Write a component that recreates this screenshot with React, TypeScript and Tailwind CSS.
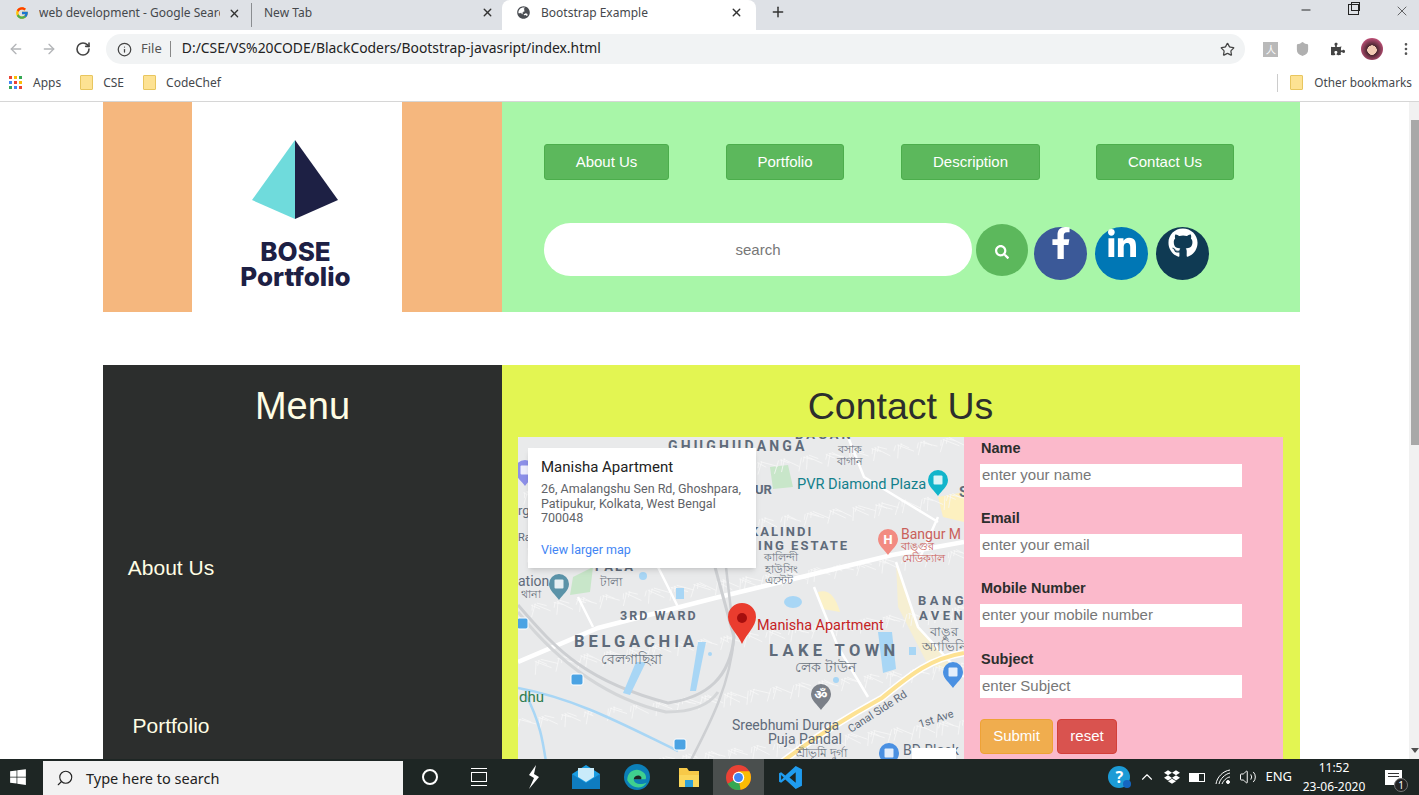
import { ArrowLeft, ArrowRight, ChevronUp, Info, Minus, MoreVertical, Plus, RotateCw, Search, Shield, Star, Volume2, X } from "lucide-react";
import { FaDropbox, FaFacebookF, FaGithub, FaGlobeAsia, FaLinkedinIn, FaPuzzlePiece, FaSearch, FaWindows } from "react-icons/fa";
import { FcGoogle } from "react-icons/fc";

const fields = [
  { label: "Name", placeholder: "enter your name", cls: "mt-0" },
  { label: "Email", placeholder: "enter your email", cls: "mt-[21px]" },
  { label: "Mobile Number", placeholder: "enter your mobile number", cls: "mt-[21px]" },
  { label: "Subject", placeholder: "enter Subject", cls: "mt-[22px]" },
];

function Folder() {
  return <span className="w-[13px] h-[15px] rounded-[1px] bg-[#fde293] border border-[#e8c65f] shrink-0" />;
}

function Tabs() {
  return (
    <div className="h-[30px] bg-[#dee1e6] flex text-[12px] text-[#45484c] shrink-0">
      <div className="w-[252px] flex items-center pl-[15px] pr-[10px] pb-[4px] border-r border-[#8a8d91] my-[3px]">
        <FcGoogle className="w-[14px] h-[14px] shrink-0" />
        <span className="ml-[10px] w-[184px] overflow-hidden whitespace-nowrap">web development - Google Search</span>
        <X className="ml-[8px] w-[13px] h-[13px] text-[#333]" strokeWidth={2.5} />
      </div>
      <div className="w-[250px] flex items-center pl-[12px] pr-[8px] pb-[5px] justify-between">
        <span>New Tab</span>
        <X className="w-[13px] h-[13px] text-[#333]" strokeWidth={2.5} />
      </div>
      <div className="w-[254px] bg-white rounded-t-lg flex items-center pl-[15px] pr-[13px] pb-[5px]">
        <FaGlobeAsia className="w-[13px] h-[13px] text-[#4a4d52]" />
        <span className="ml-[11px] flex-1">Bootstrap Example</span>
        <X className="w-[13px] h-[13px] text-[#333]" strokeWidth={2.5} />
      </div>
      <Plus className="ml-[14px] mt-[4px] w-[16px] h-[16px] text-[#333]" strokeWidth={2.2} />
      <div className="ml-auto flex items-start pt-[3px] pr-[9px] gap-[35px] text-[#222]">
        <Minus className="w-[14px] h-[14px] text-black" strokeWidth={1.4} />
        <span className="relative w-[11px] h-[11px] mt-[1px] border border-[#222] bg-[#dee1e6] before:absolute before:content-[''] before:left-[2px] before:-top-[3px] before:w-[9px] before:h-[9px] before:border before:border-[#222]" />
        <X className="w-[16px] h-[16px]" strokeWidth={1} />
      </div>
    </div>
  );
}

function Toolbar() {
  return (
    <div className="h-[38px] bg-white flex items-center text-[#5f6368] shrink-0">
      <ArrowLeft className="ml-[8px] w-[16px] h-[16px] text-[#b3b5b8]" />
      <ArrowRight className="ml-[17px] w-[16px] h-[16px] text-[#b3b5b8]" />
      <RotateCw className="ml-[18px] w-[16px] h-[16px] text-[#444]" strokeWidth={2.4} />
      <div className="ml-[15px] w-[1139px] h-[30px] rounded-full bg-[#f1f3f4] flex items-center text-[13px]">
        <Info className="ml-[11px] w-[15px] h-[15px] text-[#444]" />
        <span className="ml-[9px] text-[#555]">File</span>
        <span className="ml-[8px] w-px h-[16px] bg-[#888]" />
        <span className="ml-[11px] mb-[2px] text-[13.9px] text-[#222]">D:/CSE/VS%20CODE/BlackCoders/Bootstrap-javasript/index.html</span>
        <Star className="ml-auto mr-[10px] w-[15px] h-[15px] text-[#444]" />
      </div>
      <div className="ml-[18px] w-[15px] h-[15px] bg-[#b9b9b9] flex items-center justify-center text-[10px] leading-none text-white">人</div>
      <Shield className="ml-[17px] w-[15px] h-[18px] text-[#b0b0b0] fill-[#b0b0b0]" />
      <FaPuzzlePiece className="ml-[21px] w-[14px] h-[14px] text-[#444]" />
      <div className="ml-[16px] w-[22px] h-[22px] rounded-full bg-[radial-gradient(circle_at_50%_55%,#f2cbb4_28%,#4a2730_30%,#c2527a_75%)]" />
      <MoreVertical className="ml-[15px] w-[16px] h-[16px] text-[#555]" />
    </div>
  );
}

function Bookmarks() {
  const dots = ["#ea4335", "#fbbc05", "#34a853", "#4285f4", "#ea4335", "#fbbc05", "#34a853", "#4285f4", "#ea4335"];
  return (
    <div className="h-[34px] pb-[4px] bg-white border-b border-[#d6d6d6] flex items-center text-[12px] text-[#45484c] shrink-0">
      <div className="ml-[9px] grid grid-cols-3 gap-[2px]">
        {dots.map((c, i) => (
          <span key={i} className="w-[3px] h-[3px]" style={{ background: c }} />
        ))}
      </div>
      <span className="ml-[11px]">Apps</span>
      <span className="ml-[19px] flex"><Folder /></span>
      <span className="ml-[10px]">CSE</span>
      <span className="ml-[19px] flex"><Folder /></span>
      <span className="ml-[10px]">CodeChef</span>
      <span className="ml-auto w-px h-[18px] bg-[#ccc]" />
      <span className="ml-[12px] flex"><Folder /></span>
      <span className="ml-[11px] mr-[7px] text-[11.8px]">Other bookmarks</span>
    </div>
  );
}

function Pin({ x, y, color, glyph }: { x: number; y: number; color: string; glyph?: string }) {
  return (
    <g transform={`translate(${x} ${y})`}>
      <path d="M0 13 C-3 8 -10 4 -10 -3 A10 10 0 1 1 10 -3 C10 4 3 8 0 13Z" fill={color} />
      {glyph ? (
        <text x="0" y="2" textAnchor="middle" fill="#fff" style={{ font: "700 13px 'Noto Sans', sans-serif" }}>{glyph}</text>
      ) : (
        <rect x="-4.5" y="-7.5" width="9" height="9" rx="1" fill="#fff" opacity="0.85" />
      )}
    </g>
  );
}

function MapArt() {
  // thin side streets, scattered the same way on every render
  const streets = Array.from({ length: 620 }, (_, i) => {
    const x = (i * 73.7) % 446;
    const y = (i * 47.3) % 340;
    const a = (i % 2 ? 0.35 : 1.75) + Math.sin(i) * 0.12;
    const l = 6 + (i % 4) * 4;
    return { x, y, x2: x + Math.cos(a) * l, y2: y + Math.sin(a) * l };
  });
  const bold = "700 13px Roboto, sans-serif";
  const ben = "11px 'Noto Sans', 'Noto Sans CJK SC', sans-serif";
  return (
    <svg viewBox="0 0 446 340" className="w-[446px] h-[340px] block bg-[#e9eaeb]">
      <path d="M378 125 L400 190 L440 235 L410 228 L380 170 Z" fill="#f6efd2" />
      <path d="M420 60 L446 55 V85 L425 80 Z" fill="#fdf0c0" />
      <path d="M300 155 Q315 150 322 175 L305 172 Z" fill="#fbf1c7" />
      <path d="M252 30 L270 28 L275 50 L255 52 Z" fill="#c8e6c9" />
      <path d="M55 140 L75 130 L72 155 L52 158 Z" fill="#c8e6c9" />
      {streets.map((s, i) => (
        <line key={i} x1={s.x} y1={s.y} x2={s.x2} y2={s.y2} stroke="#f8f8f8" strokeWidth="0.8" />
      ))}
      <path d="M0 225 L80 191 L197 161 L374 118 L446 105" stroke="#fff" strokeWidth="4.5" fill="none" />
      <path d="M60 160 L75 190 M140 130 L160 170 M296 150 L320 210 L350 260 M378 125 L400 190 L446 240 M330 0 L346 40 L420 85 M420 80 L400 125" stroke="#fff" strokeWidth="2.5" fill="none" />
      <path d="M0 168 C40 215 70 245 150 266 C190 260 212 240 216 200 L197 130" stroke="#cdcfd2" strokeWidth="3" fill="none" />
      <path d="M0 175 C40 225 90 262 148 275 C170 275 190 270 200 255" stroke="#d4d6d8" strokeWidth="3" fill="none" />
      <path d="M208 130 L216 200 C212 250 190 290 172 325" stroke="#cdcfd2" strokeWidth="2.5" fill="none" />
      <path d="M446 216 C410 222 390 240 364 261 C320 285 290 305 264 325" stroke="#fff" strokeWidth="7" fill="none" />
      <path d="M446 216 C410 222 390 240 364 261 C320 285 290 305 264 325" stroke="#fde293" strokeWidth="4" fill="none" />
      <path d="M0 251 C60 262 110 290 160 314" stroke="#a8d6f5" strokeWidth="2.5" fill="none" />
      <path d="M8 258 C22 285 25 305 28 325" stroke="#a8d6f5" strokeWidth="2.5" fill="none" />
      <g fill="#a8d6f5">
        <ellipse cx="275" cy="165" rx="9" ry="6" />
        <path d="M360 195 H374 L378 232 L365 236 Z" />
        <path d="M180 205 L188 205 L178 254 L172 254 Z" />
        <path d="M118 225 L128 225 L112 258 L105 256 Z" />
        <rect x="158" y="151" width="8" height="11" />
        <circle cx="125" cy="139" r="4" />
        <rect x="391" y="210" width="7" height="8" />
        <circle cx="318" cy="243" r="3" />
        <circle cx="192" cy="217" r="2" />
      </g>

      <g fill="#5f6b7a">
        <text x="150" y="14" style={{ font: "700 14px Roboto, sans-serif", letterSpacing: "3.2px" }}>GHUGHUDANGA</text>
        <text x="277" y="2" style={{ font: bold, letterSpacing: "3px" }}>BAGAN</text>
        <text x="237" y="57" style={{ font: bold }}>UR</text>
        <text x="232" y="99" style={{ font: bold, letterSpacing: "2px" }}>KALINDI</text>
        <text x="240" y="113" style={{ font: bold, letterSpacing: "2px" }}>ING ESTATE</text>
        <text x="77" y="134" style={{ font: bold, letterSpacing: "2px" }}>PALA</text>
        <text x="400" y="168" style={{ font: bold, letterSpacing: "3.5px" }}>BANG</text>
        <text x="401" y="183" style={{ font: bold, letterSpacing: "3.5px" }}>AVEN</text>
        <text x="102" y="183" style={{ font: "700 12.5px Roboto, sans-serif", letterSpacing: "2px" }}>3RD WARD</text>
        <text x="56" y="210" style={{ font: "700 16.5px Roboto, sans-serif", letterSpacing: "3.9px" }}>BELGACHIA</text>
        <text x="251" y="219" style={{ font: "700 16.5px Roboto, sans-serif", letterSpacing: "4.4px" }}>LAKE TOWN</text>
        <text x="441" y="60" style={{ font: "700 15px Roboto, sans-serif" }}>S</text>
        <text x="0" y="78" style={{ font: "13px Roboto, sans-serif" }}>rg</text>
        <text x="0" y="104" style={{ font: "11px Roboto, sans-serif" }}>Ra</text>
        <text x="0" y="149" style={{ font: "14px Roboto, sans-serif" }}>ation</text>
        <text x="214" y="293" style={{ font: "14px Roboto, sans-serif" }}>Sreebhumi Durga</text>
        <text x="250" y="307" style={{ font: "14px Roboto, sans-serif" }}>Puja Pandal</text>
        <text x="385" y="318" style={{ font: "14px Roboto, sans-serif" }}>BD Block</text>
        <text transform="translate(333 296) rotate(-33)" style={{ font: "11px Roboto, sans-serif" }}>Canal Side Rd</text>
        <text transform="translate(402 291) rotate(-18)" style={{ font: "11px Roboto, sans-serif" }}>1st Ave</text>
      </g>
      <g fill="#6b7480" style={{ font: ben }}>
        <text x="320" y="16">বসাক</text>
        <text x="319" y="28">বাগান</text>
        <text x="246" y="124">কালিন্দী</text>
        <text x="247" y="136">হাউসিং</text>
        <text x="247" y="147">এস্টেট</text>
        <text x="82" y="149" style={{ font: "12px 'Noto Sans', sans-serif" }}>টালা</text>
        <text x="3" y="161">থানা</text>
        <text x="83" y="227" style={{ font: "14px 'Noto Sans', sans-serif" }}>বেলগাছিয়া</text>
        <text x="277" y="235" style={{ font: "14px 'Noto Sans', sans-serif" }}>লেক টাউন</text>
        <text x="412" y="199" style={{ font: "13px 'Noto Sans', sans-serif" }}>বাঙুর</text>
        <text x="404" y="214" style={{ font: "13px 'Noto Sans', sans-serif" }}>অ্যাভিনিউ</text>
        <text x="278" y="320" style={{ font: "12px 'Noto Sans', sans-serif" }}>শ্রীভূমি দুর্গা</text>
      </g>
      <text x="279" y="52" fill="#12808c" style={{ font: "14.6px Roboto, sans-serif" }}>PVR Diamond Plaza</text>
      <text x="383" y="102" fill="#c9605a" style={{ font: "14px Roboto, sans-serif" }}>Bangur M</text>
      <text x="383" y="113" fill="#c9605a" style={{ font: ben }}>বাঙ্গুর</text>
      <text x="384" y="125" fill="#c9605a" style={{ font: ben }}>মেডিক্যাল</text>
      <text x="1" y="265" fill="#2f7d4f" style={{ font: "15px Roboto, sans-serif" }}>dhu</text>
      <text x="239" y="193" fill="#c5221f" style={{ font: "14.4px Roboto, sans-serif" }}>Manisha Apartment</text>

      <Pin x={420} y={46} color="#12b5cb" />
      <Pin x={370} y={105} color="#f28b82" glyph="H" />
      <Pin x={41} y={150} color="#5b93a8" />
      <Pin x={303} y={260} color="#7b8088" glyph="ॐ" />
      <Pin x={435} y={238} color="#4a90e2" />
      <Pin x={371} y={319} color="#4a90e2" />
      <Pin x={7} y={36} color="#8c8fe8" />
      <g fill="#4ba3e3" stroke="#fff">
        <rect x="-1" y="181" width="11" height="11" rx="2" />
        <rect x="53" y="237" width="12" height="11" rx="2" />
        <rect x="156" y="302" width="12" height="11" rx="2" />
      </g>
      <path d="M224 207 C220 197 210 190 210 180 A14 14 0 1 1 238 180 C238 190 228 197 224 207Z" fill="#ea3c2e" />
      <circle cx="224" cy="181" r="5" fill="#a50e0e" />
      <rect x="394" y="311" width="44" height="14" fill="#fff" />
    </svg>
  );
}

function Taskbar() {
  return (
    <div className="h-[36px] bg-[#1e2624] flex items-center text-white shrink-0">
      <FaWindows className="ml-[9px] w-[18px] h-[18px]" />
      <div className="ml-[16px] w-[360px] h-[34px] mt-[2px] bg-[#f2f2f2] flex items-center text-[#222] text-[14.5px] font-['Noto_Sans',sans-serif]">
        <Search className="ml-[13px] w-[18px] h-[18px] -scale-x-100" strokeWidth={1.5} />
        <span className="ml-[12px] mt-px">Type here to search</span>
      </div>
      <span className="ml-[19px] w-[16px] h-[16px] rounded-full border-2 border-white" />
      <div className="ml-[33px] w-[16px] h-[18px] flex flex-col justify-between">
        <span className="h-px bg-white" />
        <span className="h-[10px] border border-white" />
        <span className="h-px bg-white" />
      </div>
      <svg viewBox="0 0 16 24" className="ml-[39px] w-[16px] h-[24px]" fill="#fff"><path d="M10 0 L3 10 L8 13 L3 24 L13 12 L8 9 Z" /></svg>
      <svg viewBox="0 0 28 24" className="ml-[30px] w-[28px] h-[24px]"><path d="M14 0 L28 9 V24 H0 V9 Z" fill="#1b9de2" /><path d="M6 3 H22 V12 L14 17 L6 12Z" fill="#c9ebfa" /><path d="M0 9 L14 18 L28 9 V24 H0Z" fill="#0f7cc0" /></svg>
      <svg viewBox="0 0 24 24" className="ml-[24px] w-[26px] h-[26px]"><circle cx="12" cy="12" r="12" fill="#0c7fb8" /><path d="M3 15 C3 7 10 4 15 6 C20 8 21 12 20 14 H9 C9 18 15 20 21 17 C18 23 8 24 3 15Z" fill="#3fd08f" /><path d="M9 14 C9 11 14 9 16 12 L16 14Z" fill="#1e2624" /></svg>
      <svg viewBox="0 0 24 24" className="ml-[27px] w-[24px] h-[24px]"><path d="M2 3 H10 L12 6 H22 V22 H2Z" fill="#f7c948" /><rect x="2" y="10" width="20" height="12" fill="#fbd75b" /><rect x="8" y="15" width="8" height="7" fill="#2d9fd8" /></svg>
      <div className="ml-[12px] w-[51px] h-[36px] bg-[#4a4f4e] flex items-center justify-center">
        <svg viewBox="0 0 24 24" className="w-[25px] h-[25px]"><circle cx="12" cy="12" r="12" fill="#e94235" /><path d="M12 12 L1.6 18 A12 12 0 0 0 14 23.8Z" fill="#34a853" /><path d="M12 12 L14 23.8 A12 12 0 0 0 22.4 6 L12 6Z" fill="#fbbc05" /><circle cx="12" cy="12" r="5.5" fill="#fff" /><circle cx="12" cy="12" r="4.3" fill="#4285f4" /></svg>
      </div>
      <svg viewBox="0 0 24 24" className="ml-[14px] w-[25px] h-[25px]" fill="#1f9cf0"><path d="M17 1 L23 4 V20 L17 23 L7 14 L3 17 L1 16 V8 L3 7 L7 10 Z M17 7 L11 12 L17 17 Z M3 9.5 V14.5 L5.5 12 Z" fillRule="evenodd" /></svg>
      <div className="ml-auto flex items-center">
        <div className="relative w-[22px] h-[22px] rounded-full bg-[#1c9bd6] flex items-center justify-center text-[16px] font-bold leading-none">
          ?
          <span className="absolute -right-[1px] bottom-0 w-[8px] h-[8px] rounded-full bg-[#1565c0]" />
        </div>
        <ChevronUp className="ml-[8px] w-[18px] h-[18px]" strokeWidth={1.5} />
        <FaDropbox className="ml-[8px] w-[16px] h-[16px]" />
        <div className="ml-[9px] w-[16px] h-[9px] border border-white"><div className="w-[9px] h-full bg-white" /></div>
        <svg viewBox="0 0 16 16" className="ml-[10px] w-[16px] h-[16px]" fill="none" stroke="#fff"><path d="M1 15 C2 8 8 2 15 1 M4 15 C5 10 10 5 15 4 M7 15 C8 12 12 8 15 8" /><circle cx="13" cy="13" r="1.5" fill="#fff" /></svg>
        <Volume2 className="ml-[8px] w-[18px] h-[18px]" strokeWidth={1.3} />
        <span className="ml-[8px] text-[13px] font-['Noto_Sans',sans-serif]">ENG</span>
        <div className="ml-[7px] w-[70px] text-center text-[12px] leading-[19px] whitespace-nowrap font-['Noto_Sans',sans-serif]">
          <div>11:52</div>
          <div>23-06-2020</div>
        </div>
        <div className="relative ml-[16px] mr-[17px] w-[17px] h-[15px] bg-white flex flex-col gap-[2px] p-[3px]">
          <span className="h-px bg-[#333]" />
          <span className="h-px bg-[#333]" />
          <span className="absolute -right-[6px] -bottom-[7px] w-[14px] h-[14px] rounded-full bg-[#222] border border-[#777] text-[10px] leading-[12px] text-center">1</span>
        </div>
      </div>
    </div>
  );
}

export default function App() {
  return (
    <div className="h-[795px] w-[1419px] overflow-hidden flex flex-col font-['Noto_Sans',sans-serif]">
      <Tabs />
      <Toolbar />
      <Bookmarks />

      <div className="flex-1 min-h-0 flex bg-white font-['Liberation_Sans',sans-serif]">
        <main className="flex-1 overflow-hidden pl-[103px] pr-[109px]">
          <header className="h-[210px] flex">
            <div className="w-[399px] bg-[#f5b77e] pl-[89px] pr-[100px]">
              <div className="h-full bg-white flex flex-col items-center pt-[38px]">
                <svg viewBox="0 0 86 79" className="ml-[-5px] w-[86px] h-[79px]">
                  <path d="M43 0 L0 60 L43 79Z" fill="#6fdbdc" />
                  <path d="M43 0 L86 60 L43 79Z" fill="#1d2044" />
                </svg>
                <div className="mt-[20px] ml-[-3px] text-center text-[26px] leading-[25px] font-extrabold text-[#1d2044] font-['Inter',sans-serif]">
                  BOSE
                  <br />
                  Portfolio
                </div>
              </div>
            </div>
            <div className="flex-1 bg-[#a8f6a8] pl-[42px] pt-[42px] text-white">
              <nav className="flex text-[15px]">
                <a className="w-[125px] h-[36px] rounded-[3px] bg-[#5cb85c] border border-[#4cae4c] flex items-center justify-center">About Us</a>
                <a className="ml-[57px] w-[118px] h-[36px] rounded-[3px] bg-[#5cb85c] border border-[#4cae4c] flex items-center justify-center">Portfolio</a>
                <a className="ml-[57px] w-[139px] h-[36px] rounded-[3px] bg-[#5cb85c] border border-[#4cae4c] flex items-center justify-center">Description</a>
                <a className="ml-[56px] w-[138px] h-[36px] rounded-[3px] bg-[#5cb85c] border border-[#4cae4c] flex items-center justify-center">Contact Us</a>
              </nav>
              <div className="mt-[43px] flex items-start">
                <input
                  placeholder="search"
                  className="w-[428px] h-[53px] rounded-full bg-white text-center text-[15px] outline-none placeholder:text-[#777]"
                />
                <button className="ml-[4px] mt-[1px] w-[52px] h-[52px] rounded-full bg-[#5cb85c] flex items-center justify-center">
                  <FaSearch className="mt-[4px] w-[14px] h-[14px]" />
                </button>
                <a className="ml-[6px] mt-[4px] w-[53px] h-[53px] rounded-full bg-[#3b5998] flex justify-center">
                  <FaFacebookF className="w-[32px] h-[32px]" />
                </a>
                <a className="ml-[8px] mt-[4px] w-[53px] h-[53px] rounded-full bg-[#0077b5] flex justify-center pt-[2px]">
                  <FaLinkedinIn className="w-[32px] h-[32px]" />
                </a>
                <a className="ml-[8px] mt-[4px] w-[53px] h-[53px] rounded-full bg-[#0f3a53] flex justify-center pt-[1px]">
                  <FaGithub className="w-[30px] h-[30px]" />
                </a>
              </div>
            </div>
          </header>

          <section className="mt-[53px] flex h-[600px]">
            <aside className="w-[399px] bg-[#2c2e2d] text-[#fffde4]">
              <h2 className="h-[72px] pt-[16px] text-center text-[38px] leading-[50px]">Menu</h2>
              <ul className="mt-[52px] w-[136px] text-center text-[21px]">
                <li className="h-[158px] flex items-center justify-center">About Us</li>
                <li className="h-[158px] flex items-center justify-center">Portfolio</li>
              </ul>
            </aside>
            <div className="flex-1 bg-[#e3f552] pl-[16px] pr-[17px]">
              <h2 className="h-[72px] pt-[16px] text-center text-[37.5px] leading-[50px] text-[#2c2e2d]">Contact Us</h2>
              <div className="flex h-[400px]">
                <div className="relative w-[446px] overflow-hidden">
                  <MapArt />
                  <div className="absolute left-[10px] top-[11px] w-[228px] h-[120px] bg-white shadow-md px-[13px] pt-[10px] font-['Roboto',sans-serif]">
                    <div className="text-[15px] leading-[18px] text-[#222]">Manisha Apartment</div>
                    <div className="mt-[6px] -mr-[6px] text-[12.5px] leading-[14.5px] text-[#5f6368]">
                      26, Amalangshu Sen Rd, Ghoshpara, Patipukur, Kolkata, West Bengal 700048
                    </div>
                    <a className="block mt-[17px] text-[12.5px] leading-[14px] text-[#4285f4]">View larger map</a>
                  </div>
                </div>
                <form className="flex-1 bg-[#fbb9cb] pl-[16px] pt-px text-[#2c2e2d]">
                  {fields.map((f) => (
                    <div key={f.label} className={f.cls}>
                      <label className="block pl-px h-[20px] text-[14.5px] leading-[20px] font-bold">{f.label}</label>
                      <input
                        placeholder={f.placeholder}
                        className="mt-[6px] block w-[262px] h-[23px] bg-white px-[2px] pb-[2px] text-[15px] outline-none placeholder:text-[#777]"
                      />
                    </div>
                  ))}
                  <div className="mt-[21px] flex gap-[4px] text-[15px] text-white">
                    <button type="button" className="w-[73px] h-[35px] rounded bg-[#f0ad4e] border border-[#eea236]">Submit</button>
                    <button type="button" className="w-[60px] h-[35px] rounded bg-[#d9534f] border border-[#d43f3a]">reset</button>
                  </div>
                </form>
              </div>
            </div>
          </section>
        </main>

        <div className="w-[10px] bg-[#f1f1f1] flex flex-col items-end relative">
          <div className="mt-[18px] w-[8px] h-[325px] bg-[#a8a8a8]" />
          <span className="absolute bottom-[6px] right-0 w-0 h-0 border-x-[4px] border-x-transparent border-t-[5px] border-t-[#505050]" />
        </div>
      </div>

      <Taskbar />
    </div>
  );
}
